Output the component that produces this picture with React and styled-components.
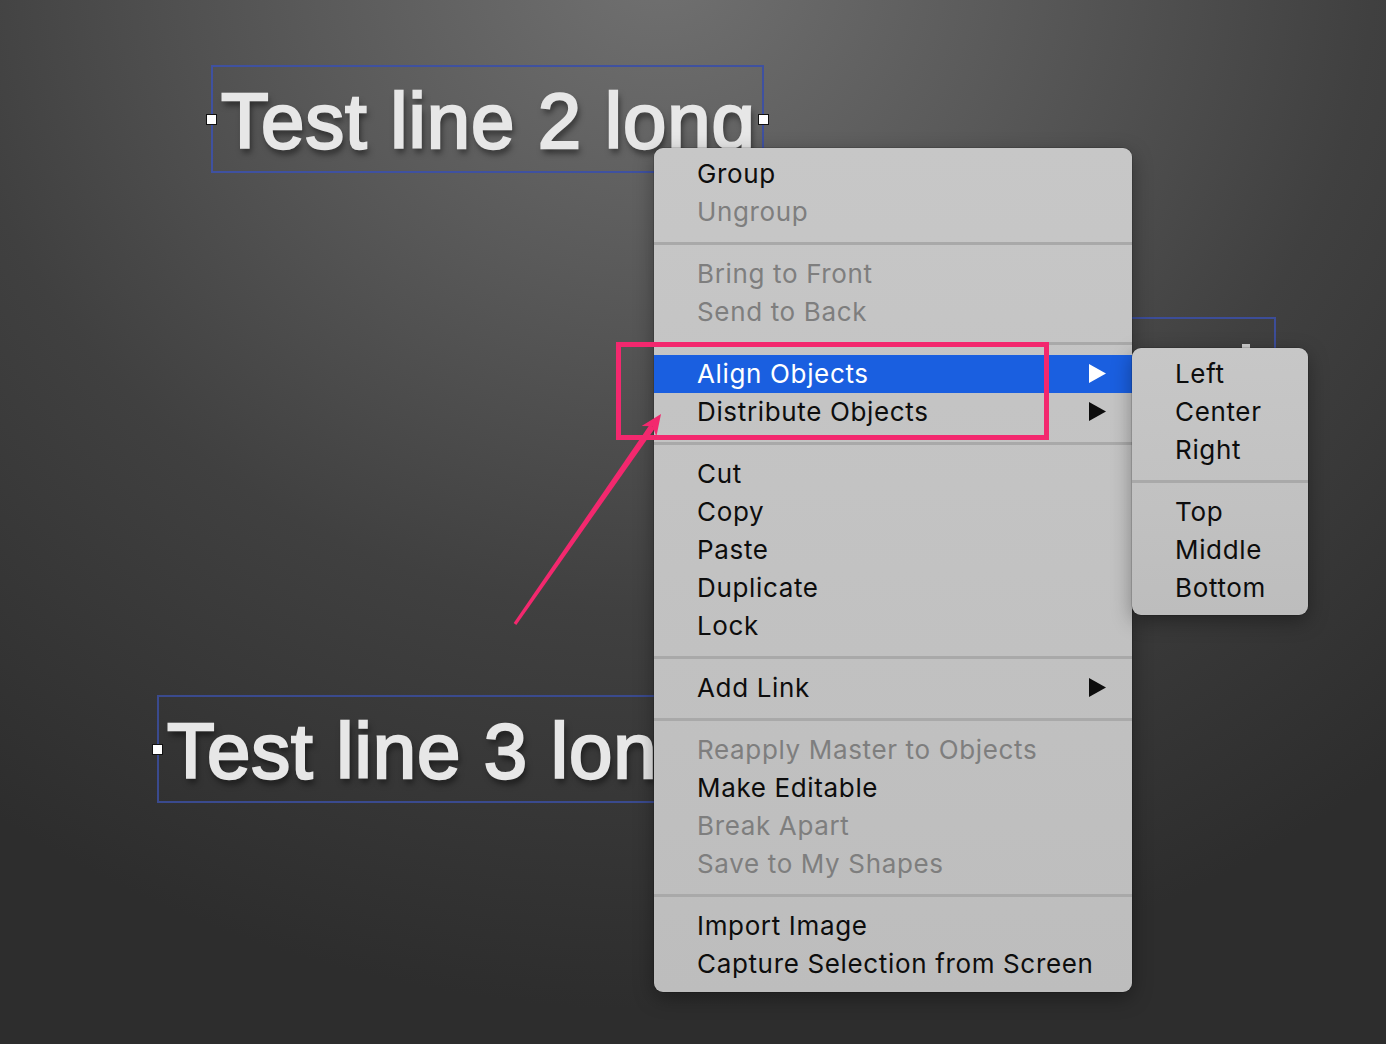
import React from "react";
import styled, { createGlobalStyle } from "styled-components";

const GlobalStyle = createGlobalStyle`
  html, body {
    margin: 0;
    padding: 0;
    background: #2c2c2c;
  }
  * { box-sizing: border-box; }
`;

const Canvas = styled.div`
  position: relative;
  width: 1386px;
  height: 1044px;
  overflow: hidden;
  background:
    radial-gradient(ellipse 1150px 1050px at 660px -40px, #717171 0%, #5a5a5a 30%, #404040 62%, #2d2d2d 100%);
  font-family: "Liberation Sans", Arial, sans-serif;
`;

const TextBox = styled.div`
  position: absolute;
  left: ${(p) => p.$x}px;
  top: ${(p) => p.$y}px;
  width: ${(p) => p.$w}px;
  height: ${(p) => p.$h}px;
  border: 2px solid ${(p) => p.$border};
  display: flex;
  align-items: center;
  padding: 4px 0 0 8px;
  white-space: nowrap;
`;

const BigText = styled.span`
  font-family: "Liberation Sans", Arial, sans-serif;
  font-size: 78px;
  line-height: 78px;
  color: #e7e7e7;
  -webkit-text-stroke: 2.4px #e7e7e7;
  text-shadow: 2px 5px 6px rgba(0, 0, 0, 0.55);
  letter-spacing: 0.9px;
`;

const Handle = styled.span`
  position: absolute;
  top: 50%;
  ${(p) => (p.$side === "left" ? "left: -7px;" : "right: -7px;")}
  width: 11px;
  height: 11px;
  margin-top: -5px;
  background: #ffffff;
  border: 1px solid #111;
`;

const StrayHandle = styled.span`
  position: absolute;
  left: 1242px;
  top: 344px;
  width: 8px;
  height: 10px;
  background: #cfcfcf;
`;

const MenuCluster = styled.div`
  position: absolute;
  left: 654px;
  top: 148px;
  display: flex;
  align-items: flex-start;
  z-index: 2;
`;

const Menu = styled.div`
  position: relative;
  width: ${(p) => p.$w}px;
  margin-top: ${(p) => p.$offset || 0}px;
  padding: 7px 0 ${(p) => p.$pb}px;
  background: linear-gradient(180deg, #c7c7c7 0%, #c2c2c2 50%, #bdbdbd 100%);
  border-radius: 9px;
  box-shadow: 0 6px 20px rgba(0, 0, 0, 0.35), 0 0 0 0.5px rgba(0, 0, 0, 0.25);
  font-family: Inter, "Liberation Sans", sans-serif;
`;

const Item = styled.div`
  display: flex;
  align-items: center;
  justify-content: space-between;
  height: 38px;
  padding: 0 25px 0 43px;
  font-size: 26px;
  line-height: 38px;
  letter-spacing: 0.65px;
  white-space: nowrap;
  color: ${(p) => (p.$active ? "#ffffff" : p.$disabled ? "#7e7e7e" : "#0d0d0d")};
  background: ${(p) => (p.$active ? "#1a5fe0" : "transparent")};
`;

const Separator = styled.div`
  height: 24px;
  display: flex;
  align-items: center;
  &::after {
    content: "";
    display: block;
    width: 100%;
    height: 3px;
    background: #a9a9a9;
  }
`;

const Annotation = styled.div`
  position: absolute;
  left: 616px;
  top: 342px;
  width: 433px;
  height: 98px;
  border: 5px solid #f3286e;
  z-index: 5;
`;

const ArrowSvg = styled.svg`
  position: absolute;
  left: 500px;
  top: 400px;
  z-index: 6;
  overflow: visible;
`;

function Triangle({ color }) {
  return (
    <svg width="18" height="20" viewBox="0 0 18 20">
      <polygon points="0,0 17,9.5 0,19" fill={color} />
    </svg>
  );
}

const mainMenu = [
  [{ label: "Group" }, { label: "Ungroup", disabled: true }],
  [
    { label: "Bring to Front", disabled: true },
    { label: "Send to Back", disabled: true },
  ],
  [
    { label: "Align Objects", submenu: true, active: true },
    { label: "Distribute Objects", submenu: true },
  ],
  [
    { label: "Cut" },
    { label: "Copy" },
    { label: "Paste" },
    { label: "Duplicate" },
    { label: "Lock" },
  ],
  [{ label: "Add Link", submenu: true }],
  [
    { label: "Reapply Master to Objects", disabled: true },
    { label: "Make Editable" },
    { label: "Break Apart", disabled: true },
    { label: "Save to My Shapes", disabled: true },
  ],
  [{ label: "Import Image" }, { label: "Capture Selection from Screen" }],
];

const alignMenu = [
  [{ label: "Left" }, { label: "Center" }, { label: "Right" }],
  [{ label: "Top" }, { label: "Middle" }, { label: "Bottom" }],
];

function MenuGroups({ groups }) {
  return groups.map((group, gi) => (
    <React.Fragment key={gi}>
      {gi > 0 && <Separator />}
      {group.map((it) => (
        <Item key={it.label} $active={it.active} $disabled={it.disabled}>
          <span>{it.label}</span>
          {it.submenu && <Triangle color={it.active ? "#ffffff" : "#0d0d0d"} />}
        </Item>
      ))}
    </React.Fragment>
  ));
}

// arrow geometry (relative to svg origin at 500,400)
const start = { x: 15, y: 224 };
const tip = { x: 161, y: 14 };
const dx = tip.x - start.x;
const dy = tip.y - start.y;
const len = Math.hypot(dx, dy);
const ux = dx / len;
const uy = dy / len;
const nx = -uy;
const ny = ux;
const headLen = 21;
const headHalf = 9;
const base = { x: tip.x - ux * headLen, y: tip.y - uy * headLen };
const neck = { x: tip.x - ux * (headLen - 6), y: tip.y - uy * (headLen - 6) };
const pt = (p) => `${p.x.toFixed(1)},${p.y.toFixed(1)}`;
const shaft = [
  { x: start.x + nx * 1.6, y: start.y + ny * 1.6 },
  { x: neck.x + nx * 3.2, y: neck.y + ny * 3.2 },
  { x: neck.x - nx * 3.2, y: neck.y - ny * 3.2 },
  { x: start.x - nx * 1.6, y: start.y - ny * 1.6 },
]
  .map(pt)
  .join(" ");
const head = [
  tip,
  { x: base.x + nx * headHalf, y: base.y + ny * headHalf },
  neck,
  { x: base.x - nx * headHalf, y: base.y - ny * headHalf },
]
  .map(pt)
  .join(" ");

export default function App() {
  return (
    <>
      <GlobalStyle />
      <Canvas>
        <TextBox $x={211} $y={65} $w={553} $h={108} $border="#3f51a0">
          <Handle $side="left" />
          <BigText>Test line 2 long</BigText>
          <Handle $side="right" />
        </TextBox>

        <TextBox $x={900} $y={317} $w={376} $h={200} $border="#3c4d98" />
        <StrayHandle />

        <TextBox $x={157} $y={695} $w={553} $h={108} $border="#3a4a8e">
          <Handle $side="left" />
          <BigText>Test line 3 long</BigText>
        </TextBox>

        <MenuCluster>
          <Menu $w={478} $pb={9}>
            <MenuGroups groups={mainMenu} />
          </Menu>
          <Menu $w={176} $pb={8} $offset={200}>
            <MenuGroups groups={alignMenu} />
          </Menu>
        </MenuCluster>

        <Annotation />

        <ArrowSvg width="180" height="240" viewBox="0 0 180 240">
          <polygon points={shaft} fill="#f3286e" />
          <polygon points={head} fill="#f3286e" />
        </ArrowSvg>
      </Canvas>
    </>
  );
}
